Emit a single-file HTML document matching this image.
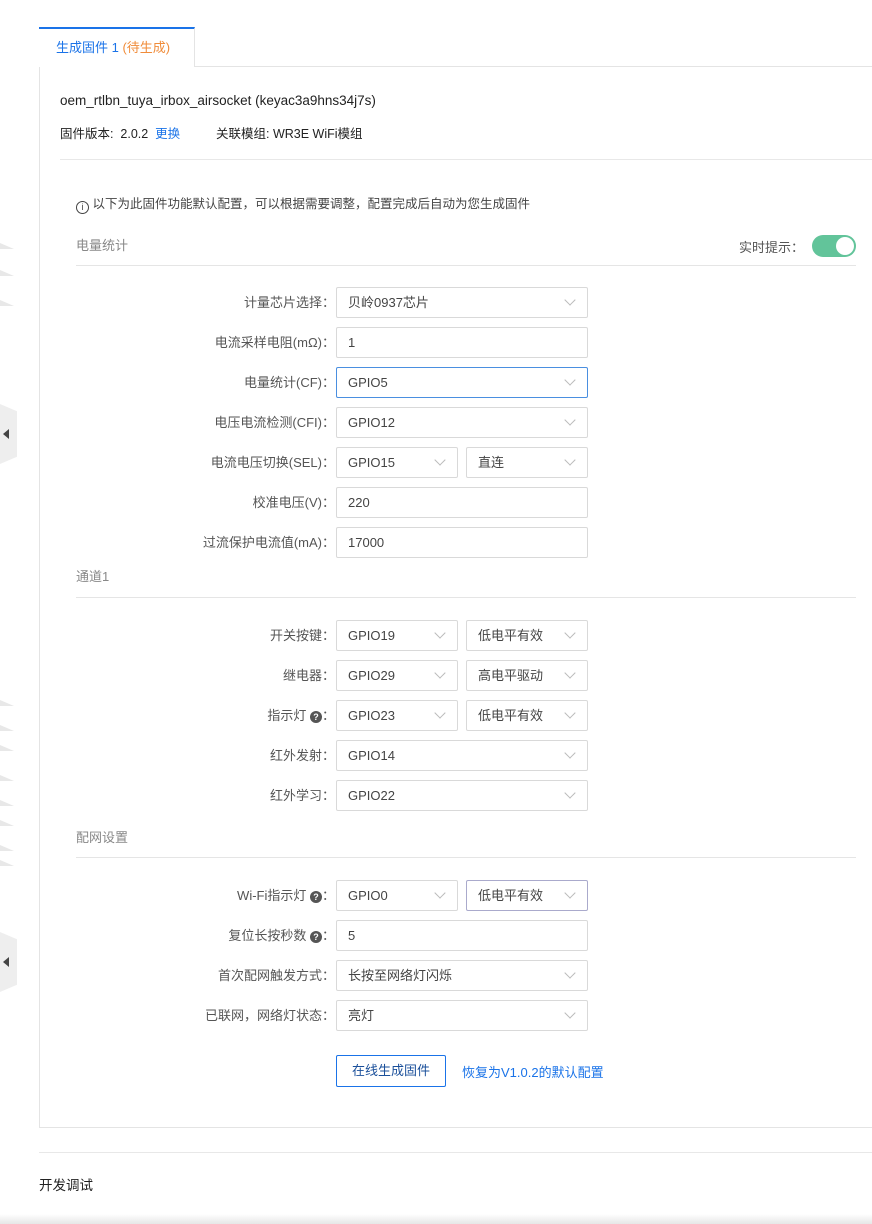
<!DOCTYPE html>
<html><head><meta charset="utf-8"><style>
*{box-sizing:border-box;margin:0;padding:0}
body{width:872px;height:1224px;background:#fff;position:relative;overflow:hidden;font-family:"Liberation Sans","Noto Sans CJK SC",sans-serif;font-size:13px;color:#333}
.a{position:absolute;white-space:nowrap}
.lbl{position:absolute;right:537px;color:#555;font-size:13px;line-height:30px;height:30px;padding-top:1px}
.box{position:absolute;height:31px;border:1px solid #d9d9d9;border-radius:2px;padding-left:11px;line-height:29px;color:#444;font-size:13px}
.sel::after{content:"";position:absolute;right:13px;top:8px;width:7px;height:7px;border-right:1px solid #bbb;border-bottom:1px solid #bbb;transform:rotate(45deg)}
.sec{position:absolute;left:76px;width:780px;border-bottom:1px solid #e5e5e5;color:#888;font-size:13px;height:20px}
.q{display:inline-block;width:12px;height:12px;border-radius:50%;background:#555;color:#fff;font-size:9px;line-height:12px;text-align:center;font-weight:bold;vertical-align:0}
.side{position:absolute;left:0;width:17px;height:60px;background:#eee;clip-path:polygon(0 0,100% 12%,100% 88%,0 100%)}
.side::after{content:"";position:absolute;left:3px;top:25px;border-right:6px solid #444;border-top:5px solid transparent;border-bottom:5px solid transparent}
.z{position:absolute;left:0;width:14px;height:6px;background:#e8e8e8;clip-path:polygon(0 0,100% 100%,0 100%)}
</style></head><body>
<div class="side" style="top:404px"></div>
<div class="side" style="top:932px"></div>
<div class="z" style="top:243px"></div><div class="z" style="top:270px"></div><div class="z" style="top:300px"></div>
<div class="z" style="top:700px"></div><div class="z" style="top:725px"></div><div class="z" style="top:745px"></div><div class="z" style="top:775px"></div><div class="z" style="top:800px"></div><div class="z" style="top:820px"></div><div class="z" style="top:845px"></div><div class="z" style="top:860px"></div>

<div class="a" style="left:39px;top:66px;width:840px;height:1062px;border-left:1px solid #e4e4e4;border-bottom:1px solid #e4e4e4"></div>
<div class="a" style="left:195px;top:66px;width:677px;border-top:1px solid #e4e4e4"></div>
<div class="a" style="left:39px;top:27px;width:156px;height:40px;border-top:2px solid #1a73e8;border-right:1px solid #e4e4e4;background:#fff;padding-left:17px;line-height:38px;font-size:13px;color:#1a73e8">生成固件 1 <span style="color:#f08c3a">(待生成)</span></div>

<div class="a" style="left:60px;top:93px;font-size:13.5px;color:#222">oem_rtlbn_tuya_irbox_airsocket (keyac3a9hns34j7s)</div>
<div class="a" style="left:60px;top:123px;font-size:12.5px;color:#222">固件版本:&nbsp; 2.0.2&nbsp; <span style="color:#1a73e8">更换</span></div>
<div class="a" style="left:216px;top:123px;font-size:12.5px;color:#222">关联模组: WR3E WiFi模组</div>
<div class="a" style="left:60px;top:159px;width:812px;border-top:1px solid #e8e8e8"></div>

<div class="a" style="left:76px;top:193px;font-size:12.5px;color:#444"><span style="display:inline-block;width:13px;height:13px;border:1px solid #444;border-radius:50%;font-size:9px;line-height:11px;text-align:center;vertical-align:-2px">i</span> 以下为此固件功能默认配置，可以根据需要调整，配置完成后自动为您生成固件</div>

<div class="sec" style="top:237px;height:29px;line-height:18px">电量统计</div>
<div class="a" style="left:739px;top:237px;color:#555">实时提示：</div>
<div class="a" style="left:812px;top:235px;width:44px;height:22px;border-radius:11px;background:#62c49a"><div style="position:absolute;right:2px;top:2px;width:18px;height:18px;border-radius:50%;background:#fff"></div></div>

<div class="lbl" style="top:287px">计量芯片选择：</div><div class="box sel" style="left:336px;top:287px;width:252px">贝岭0937芯片</div>
<div class="lbl" style="top:327px">电流采样电阻(mΩ)：</div><div class="box" style="left:336px;top:327px;width:252px">1</div>
<div class="lbl" style="top:367px">电量统计(CF)：</div><div class="box sel" style="left:336px;top:367px;width:252px;border-color:#4a8fe0">GPIO5</div>
<div class="lbl" style="top:407px">电压电流检测(CFI)：</div><div class="box sel" style="left:336px;top:407px;width:252px">GPIO12</div>
<div class="lbl" style="top:447px">电流电压切换(SEL)：</div><div class="box sel" style="left:336px;top:447px;width:122px">GPIO15</div><div class="box sel" style="left:466px;top:447px;width:122px">直连</div>
<div class="lbl" style="top:487px">校准电压(V)：</div><div class="box" style="left:336px;top:487px;width:252px">220</div>
<div class="lbl" style="top:527px">过流保护电流值(mA)：</div><div class="box" style="left:336px;top:527px;width:252px">17000</div>

<div class="sec" style="top:568px;height:30px;line-height:18px">通道1</div>
<div class="lbl" style="top:620px">开关按键：</div><div class="box sel" style="left:336px;top:620px;width:122px">GPIO19</div><div class="box sel" style="left:466px;top:620px;width:122px">低电平有效</div>
<div class="lbl" style="top:660px">继电器：</div><div class="box sel" style="left:336px;top:660px;width:122px">GPIO29</div><div class="box sel" style="left:466px;top:660px;width:122px">高电平驱动</div>
<div class="lbl" style="top:700px">指示灯 <span class="q">?</span>：</div><div class="box sel" style="left:336px;top:700px;width:122px">GPIO23</div><div class="box sel" style="left:466px;top:700px;width:122px">低电平有效</div>
<div class="lbl" style="top:740px">红外发射：</div><div class="box sel" style="left:336px;top:740px;width:252px">GPIO14</div>
<div class="lbl" style="top:780px">红外学习：</div><div class="box sel" style="left:336px;top:780px;width:252px">GPIO22</div>

<div class="sec" style="top:829px;height:29px;line-height:18px">配网设置</div>
<div class="lbl" style="top:880px">Wi-Fi指示灯 <span class="q">?</span>：</div><div class="box sel" style="left:336px;top:880px;width:122px">GPIO0</div><div class="box sel" style="left:466px;top:880px;width:122px;border-color:#aac">低电平有效</div>
<div class="lbl" style="top:920px">复位长按秒数 <span class="q">?</span>：</div><div class="box" style="left:336px;top:920px;width:252px">5</div>
<div class="lbl" style="top:960px">首次配网触发方式：</div><div class="box sel" style="left:336px;top:960px;width:252px">长按至网络灯闪烁</div>
<div class="lbl" style="top:1000px">已联网，网络灯状态：</div><div class="box sel" style="left:336px;top:1000px;width:252px">亮灯</div>

<div class="a" style="left:336px;top:1055px;width:110px;height:32px;border:1px solid #1a73e8;border-radius:2px;text-align:center;line-height:30px;color:#1a4f9a">在线生成固件</div>
<div class="a" style="left:462px;top:1062px;color:#1a73e8">恢复为V1.0.2的默认配置</div>

<div class="a" style="left:39px;top:1152px;width:833px;border-top:1px solid #e8e8e8"></div>
<div class="a" style="left:39px;top:1174px;font-size:13.5px;color:#222">开发调试</div>
<div class="a" style="left:0;top:1214px;width:872px;height:10px;background:linear-gradient(#fff,#e6e6e6)"></div>
</body></html>
